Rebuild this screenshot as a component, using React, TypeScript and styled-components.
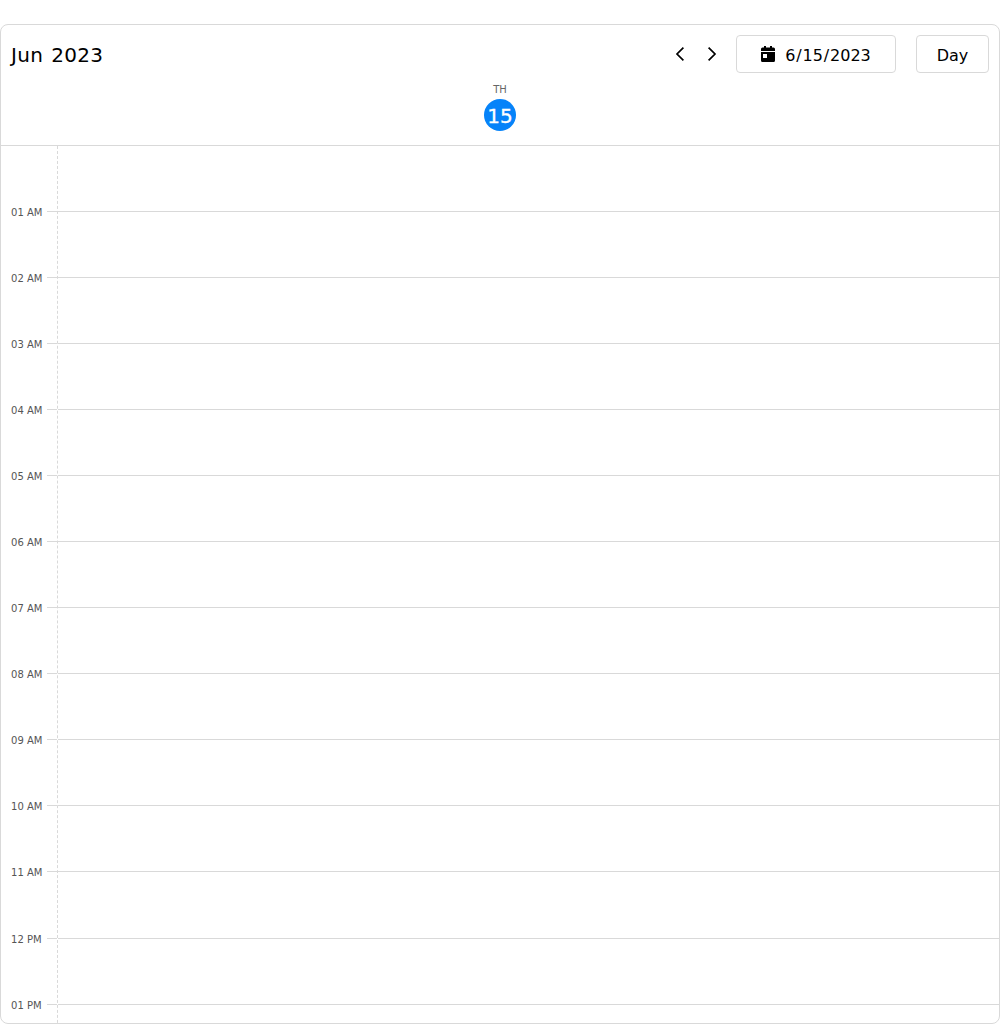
import React from 'react';
import styled, { createGlobalStyle } from 'styled-components';

const GlobalStyle = createGlobalStyle`
  * { box-sizing: border-box; }
  html, body { margin: 0; background: #fff; overflow: hidden; }
  body, button { font-family: Verdana, "DejaVu Sans", sans-serif; color: #000; }
`;

const Page = styled.div`
  height: 1024px;
  padding-top: 24px;
`;

const Scheduler = styled.main`
  height: 1000px;
  display: flex;
  flex-direction: column;
  overflow: hidden;
  border: 1px solid #d9d9d9;
  border-radius: 8px;
  background: #fff;
`;

const Toolbar = styled.header`
  flex: none;
  height: 58px;
  padding: 0 10px;
  display: flex;
  align-items: center;
`;

const Title = styled.h1`
  margin: 0;
  padding-top: 2px;
  flex: 1;
  font-size: 20px;
  font-weight: 400;
  line-height: 24px;
  letter-spacing: 0.3px;
  word-spacing: 1.4px;
  white-space: nowrap;
`;

const Arrow = styled.button`
  width: 32px;
  height: 32px;
  padding: 0;
  border: 0;
  background: transparent;
  display: flex;
  align-items: center;
  justify-content: center;
`;

const Button = styled.button<{ $width: number; $gap: number }>`
  width: ${p => p.$width}px;
  height: 38px;
  margin-left: ${p => p.$gap}px;
  padding: 0;
  display: flex;
  align-items: center;
  justify-content: center;
  gap: 10px;
  border: 1px solid #d9d9d9;
  border-radius: 4px;
  background: #fff;
  font-size: 16px;
`;

const ButtonText = styled.span`
  padding-top: 2px;
`;

const Slash = styled.span`
  padding: 0 0.9px;
`;

const DayHeader = styled.section`
  flex: none;
  height: 63px;
  padding-top: 1px;
  display: flex;
  flex-direction: column;
  align-items: center;
  border-bottom: 1px solid #d9d9d9;
`;

const Weekday = styled.span`
  height: 15px;
  font-size: 10px;
  line-height: 12px;
  color: #666;
`;

const DateCircle = styled.span`
  width: 32px;
  height: 32px;
  border-radius: 50%;
  background: #0683f9;
  color: #fff;
  font-size: 20px;
  line-height: 34px;
  text-align: center;
  -webkit-text-stroke: 0.3px #fff;
`;

const Timeline = styled.section`
  flex: 1;
  min-height: 0;
  overflow: hidden;
  display: grid;
  grid-template-columns: 46px 10px 1fr;
`;

const Labels = styled.div`
  padding: 60px 0 0 10px;
`;

const HourLabel = styled.div<{ $height: number }>`
  height: ${p => p.$height}px;
  font-size: 10px;
  line-height: 14px;
  letter-spacing: 0.02px;
  white-space: nowrap;
  color: #555;
`;

const Cells = styled.div<{ $dashed?: boolean }>`
  height: 1586px;
  border-left: ${p => (p.$dashed ? '1px dashed #d9d9d9' : '0')};
`;

const Cell = styled.div<{ $height: number }>`
  height: ${p => p.$height}px;
  border-bottom: 1px solid #d9d9d9;
`;

const hours = ['01 AM', '02 AM', '03 AM', '04 AM', '05 AM', '06 AM', '07 AM', '08 AM', '09 AM', '10 AM', '11 AM', '12 PM', '01 PM'];
const cellHeight = (i: number) => (i === 11 ? 67 : 66);

function Chevron({ right = false }: { right?: boolean }) {
  return (
    <svg width="16" height="16" viewBox="0 0 16 16" fill="none" stroke="#000" strokeWidth="1.7">
      <path d={right ? 'M4.6 1.6 11 8 4.6 14.4' : 'M11.4 1.6 5 8 11.4 14.4'} />
    </svg>
  );
}

function CalendarIcon() {
  return (
    <svg width="14" height="16" viewBox="0 0 14 16">
      <path
        fillRule="evenodd"
        d="M3 0h2v1.5h4V0h2v1.5h1.5A1.5 1.5 0 0 1 14 3v2H0V3a1.5 1.5 0 0 1 1.5-1.5H3ZM0 6h14v8.5a1.5 1.5 0 0 1-1.5 1.5h-11A1.5 1.5 0 0 1 0 14.5ZM2 8v4h4V8Z"
      />
    </svg>
  );
}

export default function App() {
  return (
    <>
      <GlobalStyle />
      <Page>
        <Scheduler>
          <Toolbar>
            <Title>Jun 2023</Title>
            <Arrow aria-label="Previous day"><Chevron /></Arrow>
            <Arrow aria-label="Next day"><Chevron right /></Arrow>
            <Button $width={160} $gap={8}>
              <CalendarIcon />
              <ButtonText>6<Slash>/</Slash>15<Slash>/</Slash>2023</ButtonText>
            </Button>
            <Button $width={73} $gap={20}><ButtonText>Day</ButtonText></Button>
          </Toolbar>
          <DayHeader>
            <Weekday>TH</Weekday>
            <DateCircle>15</DateCircle>
          </DayHeader>
          <Timeline>
            <Labels>
              {hours.map((hour, i) => (
                <HourLabel key={hour} $height={cellHeight(i + 1)}>{hour}</HourLabel>
              ))}
            </Labels>
            <Cells>
              {hours.map((hour, i) => <Cell key={hour} $height={cellHeight(i)} />)}
            </Cells>
            <Cells $dashed>
              {hours.map((hour, i) => <Cell key={hour} $height={cellHeight(i)} />)}
            </Cells>
          </Timeline>
        </Scheduler>
      </Page>
    </>
  );
}
